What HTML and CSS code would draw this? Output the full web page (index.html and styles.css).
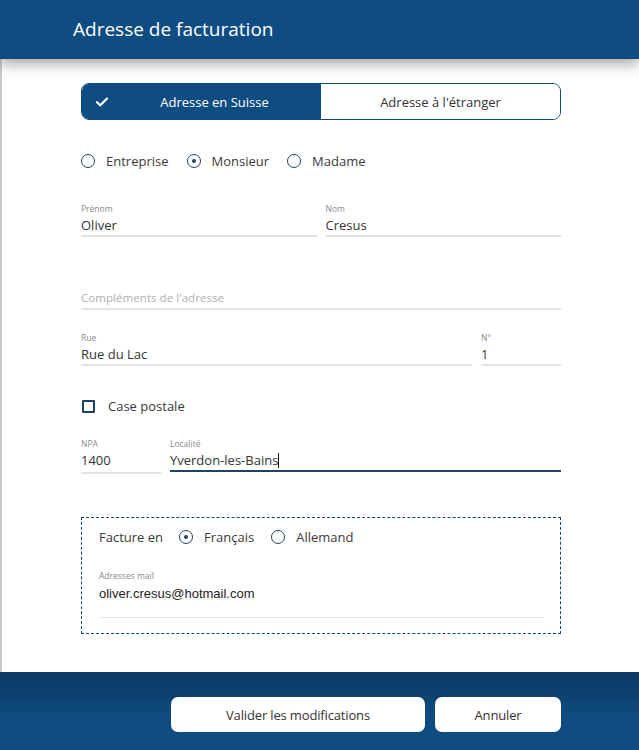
FILE: index.html
```html
<!DOCTYPE html>
<html lang="fr">
<head>
<meta charset="utf-8">
<title>Adresse de facturation</title>
<link rel="stylesheet" href="styles.css">
</head>
<body>
<div class="dialog">
  <header class="dialog-header">
    <h1 class="dialog-title">Adresse de facturation</h1>
  </header>

  <main class="dialog-body">
    <div class="segmented">
      <button class="segment segment-active">
        <svg class="segment-check" viewBox="0 0 12 10" width="12" height="10"><path d="M1 5.2 L4.3 8.3 L11 1.6" fill="none" stroke="#fff" stroke-width="2.2" stroke-linecap="round" stroke-linejoin="round"/></svg>
        <span>Adresse en Suisse</span>
      </button>
      <button class="segment"><span>Adresse à l'étranger</span></button>
    </div>

    <div class="radio-row">
      <label class="radio"><span class="radio-dot"></span>Entreprise</label>
      <label class="radio radio-on"><span class="radio-dot"></span>Monsieur</label>
      <label class="radio"><span class="radio-dot"></span>Madame</label>
    </div>

    <div class="field-row row-name">
      <div class="field">
        <span class="field-label">Prénom</span>
        <span class="field-value">Oliver</span>
      </div>
      <div class="field">
        <span class="field-label">Nom</span>
        <span class="field-value">Cresus</span>
      </div>
    </div>

    <div class="field-row row-extra">
      <div class="field">
        <span class="field-label"></span>
        <span class="field-value placeholder">Compléments de l'adresse</span>
      </div>
    </div>

    <div class="field-row row-street">
      <div class="field field-grow">
        <span class="field-label">Rue</span>
        <span class="field-value">Rue du Lac</span>
      </div>
      <div class="field field-num">
        <span class="field-label">N°</span>
        <span class="field-value">1</span>
      </div>
    </div>

    <label class="checkbox"><span class="checkbox-box"></span>Case postale</label>

    <div class="field-row row-city">
      <div class="field field-zip">
        <span class="field-label">NPA</span>
        <span class="field-value">1400</span>
      </div>
      <div class="field field-grow field-focus">
        <span class="field-label">Localité</span>
        <span class="field-value">Yverdon-les-Bains<span class="caret"></span></span>
      </div>
    </div>

    <section class="invoice-box">
      <div class="radio-row lang-row">
        <span class="lang-label">Facture en</span>
        <label class="radio radio-on"><span class="radio-dot"></span>Français</label>
        <label class="radio"><span class="radio-dot"></span>Allemand</label>
      </div>
      <div class="mail-field">
        <span class="field-label">Adresses mail</span>
        <span class="mail-value">oliver.cresus@hotmail.com</span>
      </div>
    </section>
  </main>

  <footer class="dialog-footer">
    <button class="btn btn-primary">Valider les modifications</button>
    <button class="btn btn-cancel">Annuler</button>
  </footer>
</div>
</body>
</html>
```

FILE: styles.css
```css
* {
  box-sizing: border-box;
}

html, body {
  margin: 0;
  padding: 0;
  background: #fff;
}

body {
  font-family: "Open Sans", "Noto Sans", sans-serif;
  color: #333;
  width: 639px;
  height: 750px;
  overflow: hidden;
}

.dialog {
  display: flex;
  flex-direction: column;
  height: 750px;
}

/* header bar */
.dialog-header {
  height: 59px;
  flex: none;
  background: #0f4c81;
  padding-left: 73px;
  display: flex;
  align-items: center;
  position: relative;
  z-index: 2;
  box-shadow: 0 4px 14px rgba(0, 0, 0, 0.4);
}

.dialog-title {
  margin: 0 0 1px;
  font-size: 19px;
  font-weight: 400;
  color: #fff;
}

/* form area */
.dialog-body {
  flex: 1;
  padding: 24px 78px 0 79px;
  border-left: 2px solid #c9c9c9;
}

/* Suisse / étranger switch */
.segmented {
  display: flex;
  height: 37px;
  border: 1px solid #0f4c81;
  border-radius: 8px;
  overflow: hidden;
}

.segment {
  flex: 0 0 50%;
  border: 0;
  background: #fff;
  font-family: inherit;
  font-size: 13px;
  color: #333;
  position: relative;
  display: flex;
  align-items: center;
  justify-content: center;
  padding: 0;
}

.segment-active {
  background: #0f4c81;
  color: #fff;
  padding-left: 26px;
}

.segment-check {
  position: absolute;
  left: 14px;
  top: 13px;
}

/* radio buttons */
.radio-row {
  display: flex;
  align-items: center;
  margin-top: 31px;
  height: 20px;
}

.radio {
  display: flex;
  align-items: center;
  font-size: 13px;
  color: #3a3a3a;
  margin-right: 18px;
}

.radio-dot {
  width: 14px;
  height: 14px;
  border: 1.6px solid #1d4264;
  border-radius: 50%;
  margin-right: 11px;
  display: flex;
  align-items: center;
  justify-content: center;
}

.radio-on .radio-dot::after {
  content: "";
  width: 4px;
  height: 4px;
  border-radius: 50%;
  background: #1d4264;
}

/* text fields */
.field-row {
  display: flex;
  gap: 9px;
}

.field {
  flex: 1;
  display: flex;
  flex-direction: column;
  border-bottom: 2px solid #e2e2e2;
}

.field-grow {
  flex: 1;
}

.field-num,
.field-zip {
  flex: none;
  width: 80px;
}

.field-label {
  font-size: 8.5px;
  line-height: 12px;
  height: 12px;
  color: #8a8a8a;
}

.field-value {
  font-size: 13px;
  line-height: 20px;
  color: #333;
}

.placeholder {
  color: #b0b0b0;
  font-size: 11.6px;
}

.row-name {
  margin-top: 32px;
}

.row-extra {
  margin-top: 39px;
}

.row-street,
.row-city {
  margin-top: 22px;
}

.field-focus {
  border-bottom: 2px solid #1d4264;
  margin-bottom: 2px;
}

.caret {
  display: inline-block;
  width: 1px;
  height: 15px;
  background: #111;
  vertical-align: -3px;
}

/* checkbox */
.checkbox {
  display: flex;
  align-items: center;
  height: 20px;
  margin-top: 30px;
  font-size: 13px;
  color: #3a3a3a;
}

.checkbox-box {
  width: 13px;
  height: 13px;
  border: 2px solid #1d4264;
  border-radius: 1px;
  margin: 0 13px 0 1px;
}

/* invoicing block */
.invoice-box {
  margin-top: 43px;
  border: 1px dashed #1d4264;
  padding: 0 17px 15px 17px;
}

.lang-row {
  margin-top: 9px;
}

.lang-label {
  font-size: 13px;
  color: #3a3a3a;
  margin-right: 16px;
}

.lang-row .radio {
  margin-right: 17px;
}

.mail-field {
  display: flex;
  flex-direction: column;
  margin-top: 23px;
  border-bottom: 1px solid #e2e2e2;
  padding-bottom: 14px;
}

.mail-value {
  margin-top: 3px;
  font-family: "Liberation Sans", Arial, sans-serif;
  font-size: 13px;
  line-height: 18px;
  color: #222;
}

/* bottom action bar */
.dialog-footer {
  flex: none;
  height: 78px;
  background: linear-gradient(#0b3962, #0f4c81 60%);
  display: flex;
  align-items: flex-start;
  justify-content: flex-end;
  padding: 25px 78px 0 0;
  gap: 10px;
}

.btn {
  height: 35px;
  border: 0;
  border-radius: 7px;
  background: #fff;
  font-family: inherit;
  font-size: 13px;
  letter-spacing: -0.15px;
  color: #333;
  padding: 0;
}

.btn-primary {
  width: 254px;
}

.btn-cancel {
  width: 126px;
}
```
